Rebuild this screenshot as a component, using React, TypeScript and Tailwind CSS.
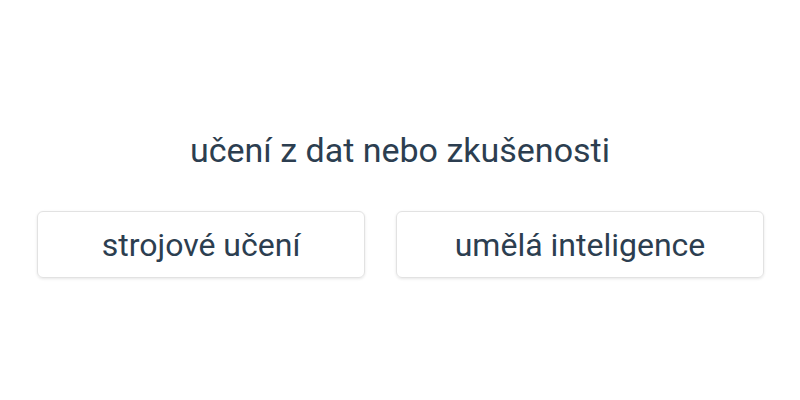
export default function App() {
  return (
    <div
      className="w-[800px] h-[400px] bg-white flex flex-col items-center text-[#2c3e50]"
      style={{ fontFamily: "Roboto, sans-serif" }}
    >
      <div className="mt-[130px] h-[40px] flex items-center text-[34px] leading-none">
        učení z dat nebo zkušenosti
      </div>
      <div className="mt-[41px] flex gap-[31px] pl-[1px]">
        <div className="w-[328px] h-[67px] flex items-center justify-center rounded-[6px] border border-[#e2e2e2] shadow-[0_1px_3px_rgba(0,0,0,0.1)] text-[32px]">
          strojové učení
        </div>
        <div className="w-[368px] h-[67px] flex items-center justify-center rounded-[6px] border border-[#e2e2e2] shadow-[0_1px_3px_rgba(0,0,0,0.1)] text-[32px]">
          umělá inteligence
        </div>
      </div>
    </div>
  );
}
